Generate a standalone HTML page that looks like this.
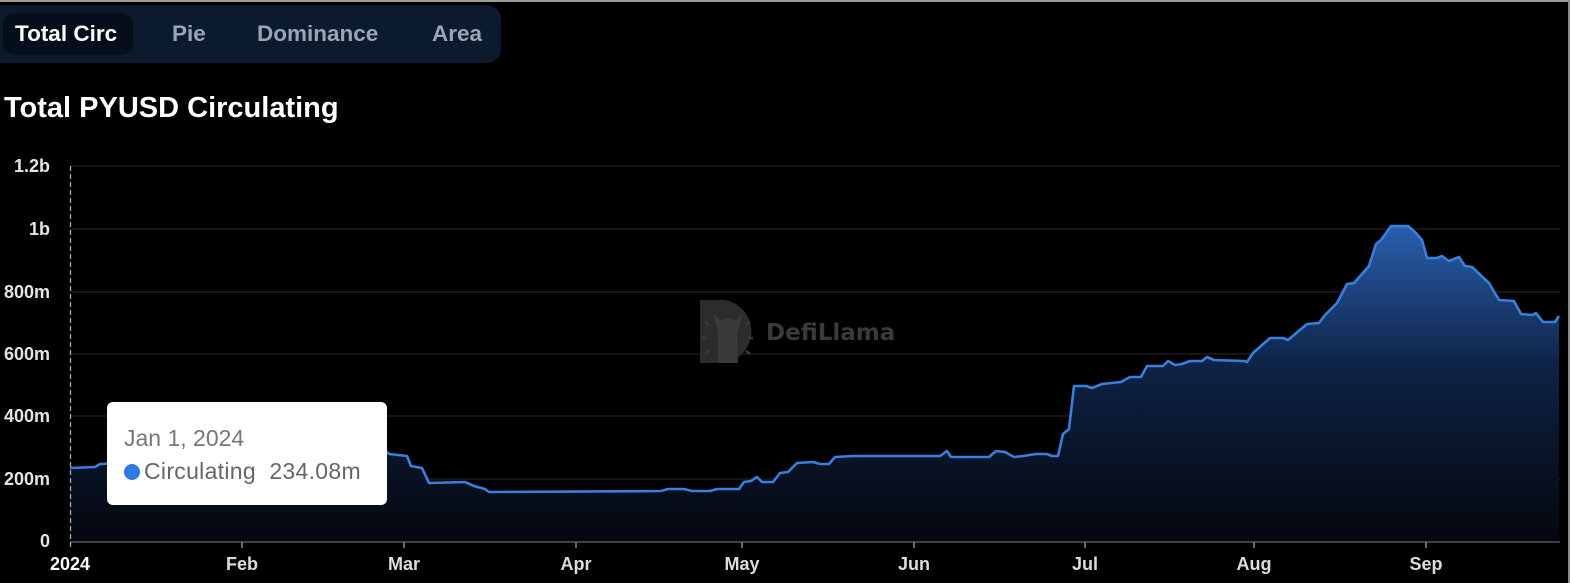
<!DOCTYPE html>
<html><head><meta charset="utf-8"><style>
html,body{margin:0;padding:0;background:#000;width:1570px;height:583px;overflow:hidden;font-family:"Liberation Sans",sans-serif}
.top{position:absolute;left:0;top:0;width:1570px;height:2px;background:#9a9a9a}
.rb{position:absolute;right:0;top:0;width:2px;height:583px;background:#8a8a8a}
.tabs{position:absolute;left:0;top:5px;width:501px;height:58px;background:#0b1a2c;border-radius:0 14px 14px 0}
.tab{position:absolute;top:0;height:58px;line-height:58px;font-size:22.5px;color:#9aa4b2;font-weight:bold}
.sel{position:absolute;left:3px;top:8px;width:130px;height:42px;background:#050f1c;border-radius:12px}
.title{position:absolute;left:4px;top:92px;font-size:29px;font-weight:bold;color:#fff}
.tip{position:absolute;left:107px;top:402px;width:280px;height:103px;background:#fff;border-radius:6px}
.tip .d{position:absolute;left:17px;top:23px;font-size:23px;color:#777}
.tip .r{position:absolute;left:17px;top:56px;font-size:23px;color:#666;letter-spacing:0.3px}
.dot{display:inline-block;width:16px;height:16px;border-radius:50%;background:#2f7ae0;vertical-align:-1px;margin-right:4px}
</style></head><body>
<div class="top"></div><div class="rb"></div>
<div class="tabs"><div class="sel"></div>
<div class="tab" style="left:15px;color:#fff">Total Circ</div>
<div class="tab" style="left:172px">Pie</div>
<div class="tab" style="left:257px">Dominance</div>
<div class="tab" style="left:432px">Area</div></div>
<div class="title">Total PYUSD Circulating</div>
<svg width="1570" height="583" style="position:absolute;left:0;top:0">
<defs><linearGradient id="g" x1="0" y1="225" x2="0" y2="542" gradientUnits="userSpaceOnUse">
<stop offset="0" stop-color="#2a5fae"/><stop offset="0.45" stop-color="#0d2245"/><stop offset="1" stop-color="#04070d"/></linearGradient></defs>
<g stroke="#1c1c1c" stroke-width="1.5">
<line x1="70" y1="166" x2="1560" y2="166"/><line x1="70" y1="229" x2="1560" y2="229"/><line x1="70" y1="292" x2="1560" y2="292"/><line x1="70" y1="354" x2="1560" y2="354"/><line x1="70" y1="416" x2="1560" y2="416"/><line x1="70" y1="479" x2="1560" y2="479"/></g>
<g font-size="18" fill="#e4e4e4" text-anchor="end" font-family="Liberation Sans" font-weight="bold">
<text x="50" y="172">1.2b</text><text x="50" y="235">1b</text><text x="50" y="298">800m</text><text x="50" y="360">600m</text><text x="50" y="422">400m</text><text x="50" y="485">200m</text><text x="50" y="547">0</text></g>
<g fill="#2c2c2c"><path d="M700 300 H725 A32 32 0 0 1 725 363 H700 Z"/></g>
<path d="M718 363 V333 L713 313 L720 320 L728 318 L736 320 L743 313 L737 333 L738 363 Z" fill="#3a3a3a"/>
<g stroke="#3a3a3a" stroke-width="2.5"><line x1="705" y1="322" x2="709" y2="325"/><line x1="702" y1="338" x2="707" y2="338"/><line x1="705" y1="354" x2="709" y2="351"/><line x1="750" y1="322" x2="746" y2="325"/><line x1="753" y1="338" x2="748" y2="338"/><line x1="750" y1="354" x2="746" y2="351"/></g>
<text x="766" y="340" font-size="23" font-weight="bold" fill="#3a3a3a" font-family="DejaVu Sans">DefiLlama</text>
<path d="M70 468 L95 467 L100 464 L120 463 L387 452 L389 454 L407 456 L411 466 L422 468 L429 483 L465 482 L474 486 L485 489 L489 492 L661 491 L668 489 L684 489 L692 491 L710 491 L717 489 L739 489 L744 482 L751 481 L757 477 L762 482 L773 482 L780 473 L788 472 L797 463 L813 462 L820 464 L829 464 L835 457 L853 456 L940 456 L947 451 L951 457 L989 457 L996 451 L1005 452 L1014 457 L1023 456 L1036 454 L1047 454 L1052 456 L1058 456 L1063 434 L1069 429 L1074 386 L1086 386 L1092 388 L1102 384 L1121 382 L1130 377 L1141 377 L1147 366 L1163 366 L1168 361 L1175 365 L1182 364 L1190 361 L1202 361 L1207 357 L1214 360 L1244 361 L1247 362 L1253 353 L1270 338 L1283 338 L1288 340 L1307 324 L1319 323 L1325 315 L1337 303 L1347 284 L1354 283 L1369 266 L1376 244 L1381 240 L1391 226 L1408 226 L1415 232 L1422 240 L1427 258 L1437 258 L1442 256 L1449 261 L1459 257 L1465 266 L1472 267 L1489 283 L1499 300 L1514 301 L1521 314 L1533 315 L1536 313 L1543 322 L1555 322 L1559 316 L1559 542 L70 542 Z" fill="url(#g)"/>
<path d="M70 468 L95 467 L100 464 L120 463 L387 452 L389 454 L407 456 L411 466 L422 468 L429 483 L465 482 L474 486 L485 489 L489 492 L661 491 L668 489 L684 489 L692 491 L710 491 L717 489 L739 489 L744 482 L751 481 L757 477 L762 482 L773 482 L780 473 L788 472 L797 463 L813 462 L820 464 L829 464 L835 457 L853 456 L940 456 L947 451 L951 457 L989 457 L996 451 L1005 452 L1014 457 L1023 456 L1036 454 L1047 454 L1052 456 L1058 456 L1063 434 L1069 429 L1074 386 L1086 386 L1092 388 L1102 384 L1121 382 L1130 377 L1141 377 L1147 366 L1163 366 L1168 361 L1175 365 L1182 364 L1190 361 L1202 361 L1207 357 L1214 360 L1244 361 L1247 362 L1253 353 L1270 338 L1283 338 L1288 340 L1307 324 L1319 323 L1325 315 L1337 303 L1347 284 L1354 283 L1369 266 L1376 244 L1381 240 L1391 226 L1408 226 L1415 232 L1422 240 L1427 258 L1437 258 L1442 256 L1449 261 L1459 257 L1465 266 L1472 267 L1489 283 L1499 300 L1514 301 L1521 314 L1533 315 L1536 313 L1543 322 L1555 322 L1559 316" fill="none" stroke="#3b7fdc" stroke-width="2.6" stroke-linejoin="round"/>
<line x1="70" y1="542" x2="1560" y2="542" stroke="#555" stroke-width="1.5"/>
<line x1="70.5" y1="166" x2="70.5" y2="548" stroke="#aaa" stroke-width="1.3" stroke-dasharray="5,3"/>
<g stroke="#888" stroke-width="1.5"><line x1="242" y1="542" x2="242" y2="548"/><line x1="404" y1="542" x2="404" y2="548"/><line x1="576" y1="542" x2="576" y2="548"/><line x1="742" y1="542" x2="742" y2="548"/><line x1="914" y1="542" x2="914" y2="548"/><line x1="1085" y1="542" x2="1085" y2="548"/><line x1="1254" y1="542" x2="1254" y2="548"/><line x1="1426" y1="542" x2="1426" y2="548"/></g>
<g font-size="18" fill="#dcdcdc" text-anchor="middle" font-family="Liberation Sans" font-weight="bold">
<text x="70" y="570" fill="#fff">2024</text><text x="242" y="570">Feb</text><text x="404" y="570">Mar</text><text x="576" y="570">Apr</text><text x="742" y="570">May</text><text x="914" y="570">Jun</text><text x="1085" y="570">Jul</text><text x="1254" y="570">Aug</text><text x="1426" y="570">Sep</text></g>
</svg>
<div class="tip"><div class="d">Jan 1, 2024</div><div class="r"><span class="dot"></span>Circulating&nbsp;&nbsp;234.08m</div></div>
</body></html>
